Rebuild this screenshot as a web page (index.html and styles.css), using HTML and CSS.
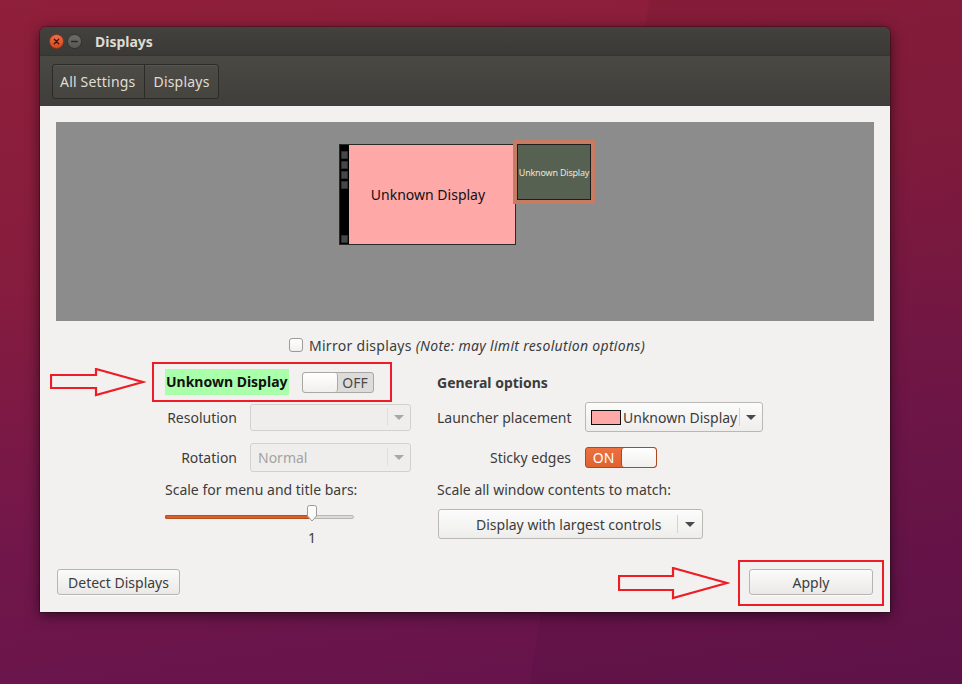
FILE: index.html
```html
<!DOCTYPE html>
<html>
<head>
<meta charset="utf-8">
<link rel="stylesheet" href="styles.css">
</head>
<body>
<div class="desktop">
  <div class="window">
    <div class="titlebar">
      <svg class="wbtn" width="15" height="15" viewBox="0 0 15 15">
        <defs><linearGradient id="cg" x1="0" y1="0" x2="0" y2="1"><stop offset="0" stop-color="#f27048"/><stop offset="1" stop-color="#d8461c"/></linearGradient></defs>
        <circle cx="7.5" cy="7.5" r="7" fill="url(#cg)" stroke="#8a2c10" stroke-width="0.8"/>
        <path d="M5.3 5.3 L9.7 9.7 M9.7 5.3 L5.3 9.7" stroke="#3b1408" stroke-width="1.3" stroke-linecap="round"/>
      </svg>
      <svg class="wbtn" width="15" height="15" viewBox="0 0 15 15">
        <defs><linearGradient id="mg" x1="0" y1="0" x2="0" y2="1"><stop offset="0" stop-color="#6e6d68"/><stop offset="1" stop-color="#57564f"/></linearGradient></defs>
        <circle cx="7.5" cy="7.5" r="7" fill="url(#mg)" stroke="#2c2b28" stroke-width="0.8"/>
        <path d="M4.6 7.5 L10.4 7.5" stroke="#2a2926" stroke-width="1.3" stroke-linecap="round"/>
      </svg>
      <span class="title">Displays</span>
    </div>
    <div class="headerbar">
      <div class="crumbs">
        <span class="crumb">All Settings</span>
        <span class="crumb">Displays</span>
      </div>
    </div>
    <div class="content">
      <div class="preview">
        <div class="mon mon-main">
          <div class="launcher"><i></i><i></i><i></i><i></i><i class="last"></i></div>
          <div class="mon-face"><span>Unknown Display</span></div>
        </div>
        <div class="mon mon-sec"><div class="sec-face">Unknown Display</div></div>
      </div>

      <div class="mirror-row">
        <span class="checkbox"></span>
        <span class="mirror-text">Mirror displays <em>(Note: may limit resolution options)</em></span>
      </div>

      <div class="settings">
        <div class="row r1">
          <div class="lcell">
            <span class="display-name">Unknown Display</span>
            <span class="switch off"><span class="knob"></span><span class="sw-text">OFF</span></span>
          </div>
          <div class="rcell"><span class="heading">General options</span></div>
        </div>
        <div class="row r2">
          <div class="lcell">
            <span class="flabel">Resolution</span>
            <div class="combo disabled small">
              <span class="combo-text"></span>
              <span class="combo-sep"></span>
              <span class="combo-arrow"></span>
            </div>
          </div>
          <div class="rcell">
            <span class="rlabel">Launcher placement</span>
            <div class="combo launcher-combo">
              <span class="combo-text"><span class="swatch"></span>Unknown Display</span>
              <span class="combo-sep"></span>
              <span class="combo-arrow"></span>
            </div>
          </div>
        </div>
        <div class="row r3">
          <div class="lcell">
            <span class="flabel">Rotation</span>
            <div class="combo disabled">
              <span class="combo-text">Normal</span>
              <span class="combo-sep"></span>
              <span class="combo-arrow"></span>
            </div>
          </div>
          <div class="rcell">
            <span class="rlabel right">Sticky edges</span>
            <span class="switch on"><span class="sw-text">ON</span><span class="knob"></span></span>
          </div>
        </div>
        <div class="row r4">
          <div class="lcell"><span>Scale for menu and title bars:</span></div>
          <div class="rcell"><span>Scale all window contents to match:</span></div>
        </div>
        <div class="row r5">
          <div class="lcell col">
            <div class="slider">
              <div class="track"><div class="fill"></div></div>
              <svg class="thumb" width="12" height="17" viewBox="0 0 12 17">
                <path d="M1.5 2.5 Q1.5 0.5 3.5 0.5 L8.5 0.5 Q10.5 0.5 10.5 2.5 L10.5 11 L6 16 L1.5 11 Z" fill="#fbfbfa" stroke="#9a9a98" stroke-width="1"/>
              </svg>
            </div>
            <div class="slider-value">1</div>
          </div>
          <div class="rcell top">
            <div class="combo scale-combo">
              <span class="combo-text">Display with largest controls</span>
              <span class="combo-sep"></span>
              <span class="combo-arrow"></span>
            </div>
          </div>
        </div>
      </div>

      <div class="footer">
        <button class="btn detect">Detect Displays</button>
        <button class="btn apply">Apply</button>
      </div>

      <svg class="annot arrow1" width="96" height="29" viewBox="0 0 96 29">
        <path d="M1 7 L46 7 L46 1 L93 14 L46 27 L46 20 L1 20 Z" fill="none" stroke="#ee1c25" stroke-width="2.2"/>
      </svg>
      <div class="annot box1"></div>
      <svg class="annot arrow2" width="112" height="33" viewBox="0 0 112 33">
        <path d="M1 9 L55 9 L55 1 L109 16 L55 31 L55 23 L1 23 Z" fill="none" stroke="#ee1c25" stroke-width="2.2"/>
      </svg>
      <div class="annot box2"></div>
    </div>
  </div>
</div>
</body>
</html>
```
FILE: styles.css
```css
html, body {
  margin: 0;
  padding: 0;
}
body {
  width: 962px;
  height: 684px;
  overflow: hidden;
  font-family: "Noto Sans", "Open Sans", sans-serif;
  font-size: 14px;
  color: #3c3c3c;
  background:
    linear-gradient(100deg, rgba(0,0,0,0) 0%, rgba(0,0,0,0) 60%, rgba(40,0,30,0.08) 60%, rgba(40,0,30,0.08) 100%),
    linear-gradient(172deg, #8f1f3a 0%, #861c3e 35%, #73174a 65%, #62134c 100%);
}
.desktop {
  padding: 27px 0 0 40px;
}
.window {
  width: 850px;
  border-radius: 6px 6px 0 0;
  box-shadow: 0 3px 14px rgba(0,0,0,0.55), 0 0 0 1px rgba(0,0,0,0.25);
}
.titlebar {
  height: 28px;
  display: flex;
  align-items: center;
  padding-left: 9px;
  background: linear-gradient(#43423e, #3a3935);
  border-radius: 6px 6px 0 0;
}
.wbtn {
  display: block;
  margin-right: 3px;
}
.title {
  margin-left: 10px;
  color: #dfdbd2;
  font-weight: bold;
  font-size: 14px;
}
.headerbar {
  height: 51px;
  box-sizing: border-box;
  padding: 8px 0 0 12px;
  background: linear-gradient(#4b4944, #3f3e3a);
  border-top: 1px solid #35342f;
}
.crumbs {
  display: inline-flex;
  height: 35px;
  box-sizing: border-box;
  border: 1px solid #2c2b28;
  border-radius: 3px;
  background: linear-gradient(#4d4b46, #45443f);
  box-shadow: inset 0 1px 0 rgba(255,255,255,0.06);
}
.crumb {
  display: flex;
  align-items: center;
  padding: 0 9px 0 7px;
  color: #e1ddd4;
  font-size: 14px;
  letter-spacing: 0.2px;
}
.crumb + .crumb {
  border-left: 1px solid #2c2b28;
  padding: 0 8px;
}
.content {
  position: relative;
  height: 506px;
  box-sizing: border-box;
  padding: 16px 16px 17px;
  background: #f2f1f0;
  display: flex;
  flex-direction: column;
}
.preview {
  position: relative;
  height: 199px;
  background: #8c8c8c;
}
.mon {
  position: absolute;
  box-sizing: border-box;
}
.mon-main {
  left: 283px;
  top: 22px;
  width: 177px;
  height: 101px;
  display: flex;
  border: 1px solid #2a2a2a;
}
.launcher {
  width: 9px;
  background: #000;
  display: flex;
  flex-direction: column;
  padding-top: 6px;
  box-sizing: border-box;
  align-items: center;
}
.launcher i {
  display: block;
  width: 7px;
  height: 8px;
  margin-bottom: 2px;
  background: #474747;
  box-sizing: border-box;
  border: 1px solid #2e2e2e;
}
.launcher i.last {
  margin-top: auto;
  margin-bottom: 1px;
}
.mon-face {
  flex: 1;
  background: #ffa8a8;
  display: flex;
  align-items: center;
  justify-content: center;
  color: #111;
  font-size: 14px;
  padding-right: 8px;
}
.mon-sec {
  left: 457px;
  top: 18px;
  width: 82px;
  height: 64px;
  border: 4px solid #c57c63;
}
.sec-face {
  height: 100%;
  box-sizing: border-box;
  border: 1px solid #1e1e1e;
  background: #566152;
  color: #e8e6dc;
  font-size: 9px;
  letter-spacing: -0.2px;
  display: flex;
  align-items: center;
  justify-content: center;
  white-space: nowrap;
}
.mirror-row {
  margin-top: 12px;
  height: 24px;
  display: flex;
  align-items: center;
  justify-content: center;
  gap: 6px;
  padding-left: 4px;
}
.checkbox {
  width: 14px;
  height: 14px;
  box-sizing: border-box;
  border: 1px solid #9b9b9b;
  border-radius: 3px;
  background: linear-gradient(#ffffff, #f1f0ee);
}
.mirror-text {
  letter-spacing: 0.3px;
}
.mirror-text em {
  font-style: italic;
}
.settings {
  padding-left: 109px;
}
.row {
  display: flex;
  align-items: center;
}
.lcell {
  width: 272px;
  display: flex;
  align-items: center;
}
.rcell {
  flex: 1;
  display: flex;
  align-items: center;
}
.r1 { margin-top: 10px; height: 30px; }
.r2 { margin-top: 5px; height: 30px; }
.r3 { margin-top: 10px; height: 30px; }
.r4 { margin-top: 7px; height: 20px; }
.r5 { margin-top: 6px; align-items: flex-start; }
.lcell.col {
  flex-direction: column;
  align-items: flex-start;
}
.rcell.top {
  padding-top: 4px;
  padding-left: 1px;
}
.display-name {
  background: #aaffaa;
  font-weight: bold;
  color: #111;
  height: 26px;
  line-height: 26px;
  padding: 0 1px;
}
.heading {
  font-weight: bold;
  color: #3c3c3c;
}
.switch {
  display: flex;
  width: 72px;
  height: 21px;
  box-sizing: border-box;
  border-radius: 3px;
  overflow: hidden;
}
.switch.off {
  margin-left: 13px;
  border: 1px solid #a9a8a5;
  background: #dddcda;
}
.switch.off .knob {
  width: 34px;
  background: linear-gradient(#ffffff, #f0efed);
  border-right: 1px solid #a9a8a5;
  border-radius: 3px;
}
.switch.off .sw-text {
  flex: 1;
  display: flex;
  align-items: center;
  justify-content: center;
  color: #4a4a4a;
  font-size: 14px;
}
.switch.on {
  margin-left: 14px;
  border: 1px solid #a94a21;
  background: linear-gradient(#ec7040, #e0622e);
}
.switch.on .sw-text {
  flex: 1;
  display: flex;
  align-items: center;
  justify-content: center;
  color: #ffffff;
  font-size: 14px;
}
.switch.on .knob {
  width: 34px;
  background: linear-gradient(#ffffff, #f0efed);
  border-left: 1px solid #a94a21;
  border-radius: 3px;
}
.flabel {
  width: 72px;
  text-align: right;
  margin-right: 13px;
}
.rlabel {
  width: 148px;
}
.rlabel.right {
  width: 134px;
  text-align: right;
}
.combo {
  display: flex;
  align-items: center;
  box-sizing: border-box;
  height: 30px;
  border: 1px solid #b9b8b5;
  border-radius: 3px;
  background: linear-gradient(#fcfcfc, #eeedeb);
  color: #3c3c3c;
}
.combo-text {
  flex: 1;
  display: flex;
  align-items: center;
  white-space: nowrap;
}
.combo-sep {
  width: 1px;
  height: 18px;
  background: #d4d3d0;
}
.combo-arrow {
  width: 22px;
  display: flex;
  justify-content: center;
}
.combo-arrow::before {
  content: "";
  border-left: 5px solid transparent;
  border-right: 5px solid transparent;
  border-top: 5px solid #4a4a4a;
}
.combo.disabled {
  width: 161px;
  height: 29px;
  border-color: #d3d1cd;
  background: #efeeec;
  color: #a3a3a1;
}
.combo.disabled.small {
  height: 27px;
}
.combo.disabled .combo-text {
  padding-left: 7px;
}
.combo.disabled .combo-arrow::before {
  border-top-color: #a8a8a6;
}
.combo.disabled .combo-sep {
  background: #e2e0dc;
}
.launcher-combo {
  width: 178px;
}
.launcher-combo .combo-text {
  padding-left: 5px;
}
.swatch {
  width: 30px;
  height: 15px;
  box-sizing: border-box;
  background: #ffa8a8;
  border: 1px solid #111;
  margin-right: 2px;
}
.scale-combo {
  width: 265px;
}
.scale-combo .combo-text {
  padding-left: 37px;
}
.scale-combo .combo-arrow {
  width: 24px;
}
.slider {
  position: relative;
  width: 189px;
  height: 18px;
}
.track {
  position: absolute;
  left: 0;
  right: 0;
  top: 10px;
  height: 4px;
  box-sizing: border-box;
  border: 1px solid #b9b8b5;
  border-radius: 2px;
  background: #dcdbd9;
}
.fill {
  width: 147px;
  height: 4px;
  margin: -1px 0 0 -1px;
  border-radius: 2px;
  background: #d7612c;
  box-shadow: inset 0 0 0 1px #b84d1e;
}
.thumb {
  position: absolute;
  left: 141px;
  top: 0;
}
.slider-value {
  margin-top: 7px;
  margin-left: 141px;
  width: 12px;
  text-align: center;
  line-height: 16px;
}
.footer {
  margin-top: auto;
  display: flex;
  justify-content: space-between;
  padding: 0 1px;
}
.btn {
  font-family: "Noto Sans", "Open Sans", sans-serif;
  font-size: 14px;
  color: #3c3c3c;
  height: 26px;
  padding: 0;
  box-sizing: border-box;
  border: 1px solid #b6b5b2;
  border-radius: 3px;
  background: linear-gradient(#fbfbfa, #eae9e7);
  box-shadow: 0 1px 0 rgba(255,255,255,0.8);
}
.btn.detect {
  width: 123px;
}
.btn.apply {
  width: 124px;
}
.annot {
  position: absolute;
}
.arrow1 {
  left: 10px;
  top: 262px;
}
.box1 {
  left: 112px;
  top: 256px;
  width: 240px;
  height: 40px;
  box-sizing: border-box;
  border: 2px solid #ee1c25;
}
.arrow2 {
  left: 578px;
  top: 461px;
}
.box2 {
  left: 698px;
  top: 454px;
  width: 146px;
  height: 46px;
  box-sizing: border-box;
  border: 2px solid #ee1c25;
}
```
